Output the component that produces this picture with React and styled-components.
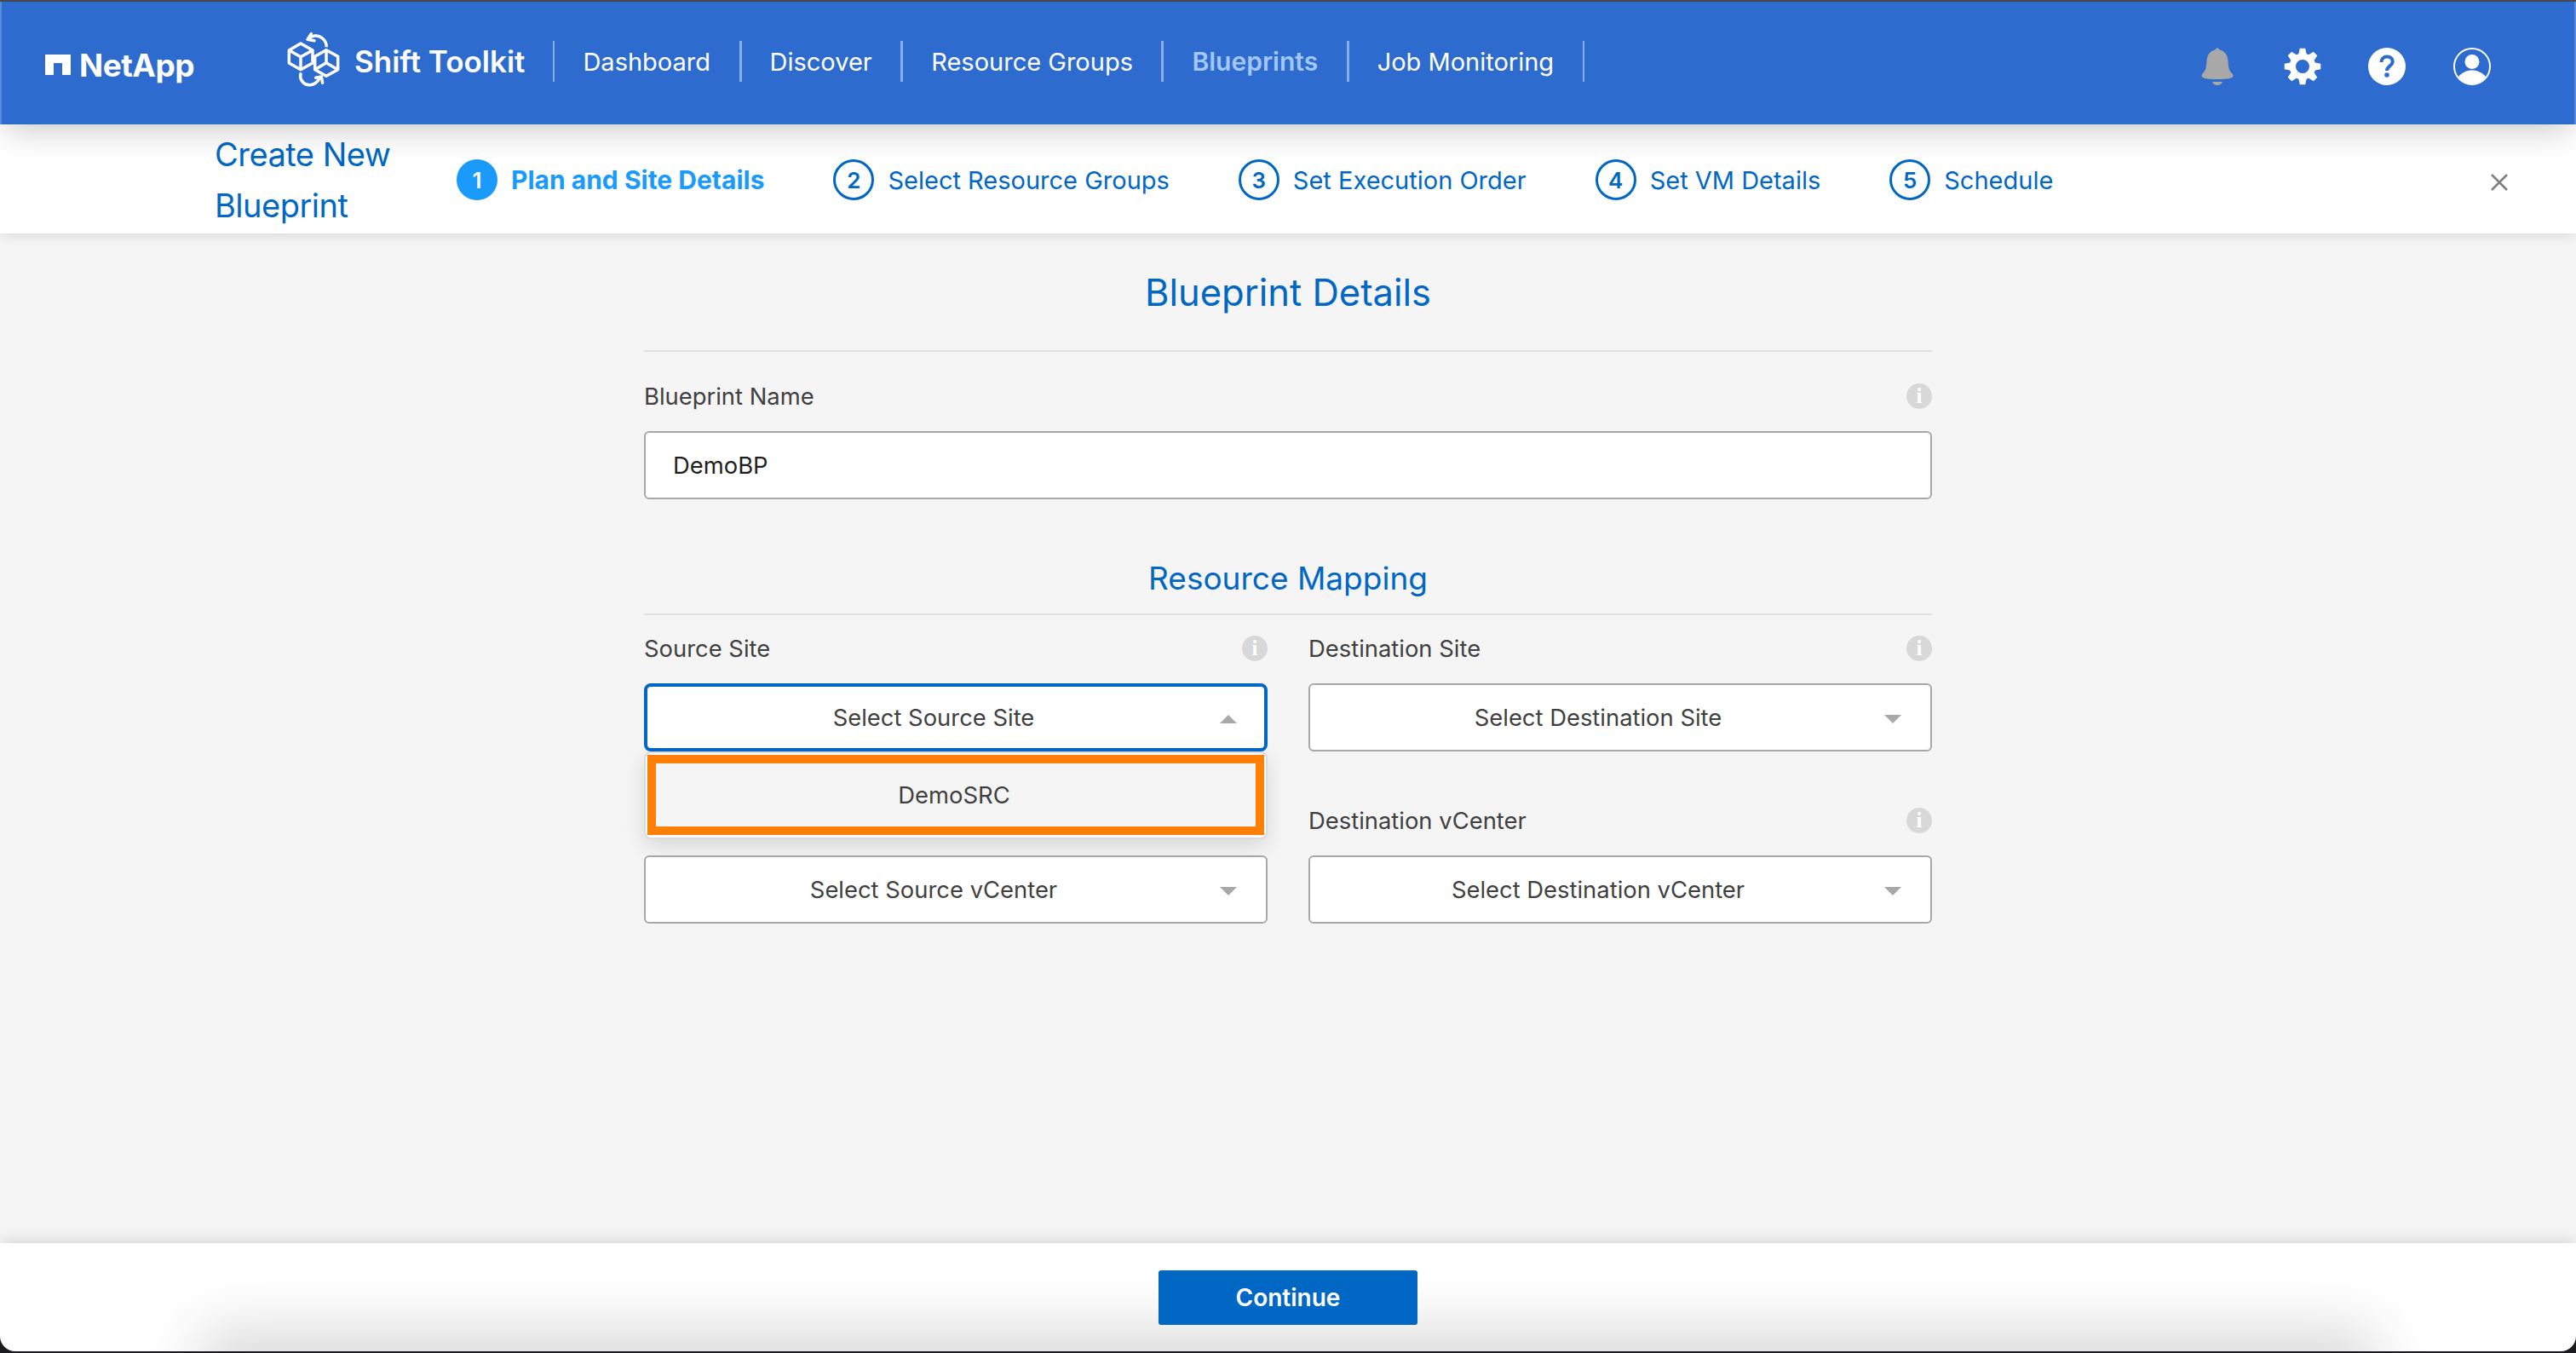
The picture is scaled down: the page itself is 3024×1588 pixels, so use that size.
import React from "react";
import styled, { createGlobalStyle } from "styled-components";

const GlobalStyle = createGlobalStyle`
    html, body {
        margin: 0;
        padding: 0;
        background: #1d1d1f;
    }
    * {
        box-sizing: border-box;
    }
`;

const Page = styled.div`
    width: 3024px;
    height: 1588px;
    display: flex;
    flex-direction: column;
    overflow: hidden;
    background: #1d1d1f;
    border-top: 2px solid #45474a;
    padding-bottom: 2px;
    font-family: Inter, "Liberation Sans", sans-serif;
    color: #404040;
`;

const Header = styled.header`
    position: relative;
    z-index: 3;
    flex: 0 0 144px;
    display: flex;
    align-items: center;
    padding: 0 0 2px 51px;
    background: #2d6bcf;
    border-left: 2px solid #5b8bd9;
    border-right: 2px solid #5b8bd9;
    box-shadow: 0 12px 36px -6px rgba(0, 0, 0, 0.22);
`;

const NetAppBrand = styled.div`
    width: 271px;
    display: flex;
    align-items: center;
    gap: 10px;
    padding-top: 6px;
    color: #fff;
    font-size: 37px;
    font-weight: 700;
    letter-spacing: -0.5px;
`;

const ToolkitBrand = styled.div`
    display: flex;
    align-items: center;
    gap: 2px;
    color: #fff;
    font-size: 35px;
    font-weight: 600;
    margin-top: -2px;
    padding-right: 33px;
`;

const CubesSvg = styled.svg`
    flex: none;
    margin-top: -4px;
`;

const NavList = styled.nav`
    display: flex;
    align-items: center;
    margin-top: -2px;
`;

const NavItem = styled.a`
    height: 48px;
    display: flex;
    align-items: center;
    padding: 0 33.5px 0 33px;
    border-left: ${(p) => (p.$thick ? 3 : 2)}px solid rgba(255, 255, 255, 0.45);
    color: ${(p) => (p.$active ? "#a3c7f7" : "#fff")};
    font-size: ${(p) => (p.$active ? 30 : 29)}px;
    font-weight: ${(p) => (p.$active ? 600 : 400)};
    white-space: nowrap;

    &:last-child {
        width: 2px;
        padding: 0;
    }
`;

const HeaderIcons = styled.div`
    margin-left: auto;
    margin-right: 98px;
    margin-top: 10px;
    display: flex;
    align-items: center;
    gap: 56px;
`;

const SubHeader = styled.div`
    position: relative;
    z-index: 2;
    flex: 0 0 128px;
    display: flex;
    align-items: center;
    padding: 0 80px 0 252px;
    background: #fff;
    box-shadow: 0 2px 14px rgba(0, 0, 0, 0.12);
`;

const WizardTitle = styled.h1`
    width: 284px;
    margin: 0;
    padding-top: 2px;
    color: #0067c5;
    font-size: 38px;
    font-weight: 400;
    line-height: 60px;
    letter-spacing: -0.5px;
`;

const Steps = styled.ol`
    display: flex;
    align-items: center;
    gap: 81px;
    margin: 0;
    padding: 2px 0 0;
    list-style: none;
`;

const Step = styled.li`
    display: flex;
    align-items: center;
    gap: 16px;
    font-size: ${(p) => (p.$active ? 30 : 29)}px;
    font-weight: ${(p) => (p.$active ? 700 : 400)};
    color: ${(p) => (p.$active ? "#1a9bfc" : "#0067c5")};
`;

const StepNumber = styled.span`
    width: 48px;
    height: 48px;
    display: flex;
    align-items: center;
    justify-content: center;
    border-radius: 50%;
    border: 3px solid ${(p) => (p.$active ? "#1a9bfc" : "#0067c5")};
    background: ${(p) => (p.$active ? "#1a9bfc" : "transparent")};
    color: ${(p) => (p.$active ? "#fff" : "#0067c5")};
    font-size: 26px;
    font-weight: 600;
`;

const CloseButton = styled.button`
    margin-left: auto;
    margin-top: 8px;
    width: 20px;
    height: 20px;
    padding: 0;
    border: 0;
    background: none;
    display: flex;
`;

const Main = styled.main`
    flex: 1;
    background: #f5f5f5;
    display: flex;
    justify-content: center;
`;

const Form = styled.div`
    width: 1512px;
    display: flex;
    flex-direction: column;
`;

const SectionTitle = styled.h2`
    margin: 0;
    display: flex;
    align-items: center;
    justify-content: center;
    border-bottom: 2px solid #dfe1e5;
    color: #0067c5;
    font-weight: 400;
    font-size: ${(p) => p.$size}px;
    height: ${(p) => p.$height}px;
    padding-bottom: ${(p) => p.$lift}px;
`;

const FieldHead = styled.div`
    height: 40px;
    display: flex;
    align-items: center;
    justify-content: space-between;
    font-size: 27.4px;
    margin-bottom: ${(p) => p.$gap}px;
`;

const InfoBadge = styled.span`
    width: 30px;
    height: 30px;
    display: flex;
    align-items: center;
    justify-content: center;
    border-radius: 50%;
    background: #d8d8d8;
    color: #fff;
    font-family: "Liberation Serif", serif;
    font-size: 25px;
    font-weight: 700;
`;

const TextInput = styled.div`
    height: 80px;
    display: flex;
    align-items: center;
    padding: 0 32px;
    background: #fff;
    border: 2px solid #a8a8a8;
    border-radius: 6px;
    font-size: 27.4px;
    color: #1e1e1e;
`;

const NameField = styled.div`
    padding-top: 32px;
    margin-bottom: 52px;
`;

const SiteGrid = styled.div`
    display: grid;
    grid-template-columns: 1fr 1fr;
    column-gap: 48px;
    row-gap: 61px;
    padding-top: 19px;
`;

const SelectBox = styled.div`
    position: relative;
    height: 80px;
    display: flex;
    align-items: center;
    justify-content: center;
    padding-right: 52px;
    background: #fff;
    border: ${(p) => (p.$open ? "4px solid #0067c5" : "2px solid #a8a8a8")};
    border-radius: ${(p) => (p.$open ? 8 : 6)}px;
    font-size: 27.4px;
`;

const Caret = styled.span`
    position: absolute;
    right: ${(p) => (p.$open ? 32 : 34)}px;
    top: 50%;
    margin-top: -3px;
    width: 0;
    height: 0;
    border-left: 10px solid transparent;
    border-right: 10px solid transparent;
    border-top: ${(p) => (p.$open ? "0" : "10px solid #a8a8a8")};
    border-bottom: ${(p) => (p.$open ? "10px solid #a8a8a8" : "0")};
`;

const Field = styled.div`
    position: relative;
`;

const Menu = styled.div`
    position: absolute;
    z-index: 1;
    left: 0;
    right: 0;
    top: 100%;
    height: 103px;
    padding: 2px;
    background: #fff;
    border: 2px solid #dcdcdc;
    border-radius: 8px;
    box-shadow: 0 8px 24px rgba(0, 0, 0, 0.12);
`;

const MenuOption = styled.div`
    height: 94px;
    display: flex;
    align-items: center;
    justify-content: center;
    padding-right: 4px;
    background: #f5f5f5;
    border: 10px solid #ff7f07;
    font-size: 27.4px;
`;

const Footer = styled.footer`
    position: relative;
    flex: 0 0 127px;
    display: flex;
    justify-content: center;
    padding-top: 32px;
    overflow: hidden;
    background: #fff;
    border-radius: 0 0 18px 18px;
    box-shadow: 0 -2px 18px rgba(0, 0, 0, 0.14);

    &::after {
        content: "";
        position: absolute;
        left: 260px;
        right: 260px;
        bottom: -30px;
        height: 30px;
        box-shadow: 0 0 70px 24px rgba(0, 0, 0, 0.16);
    }
`;

const ContinueButton = styled.button`
    position: relative;
    z-index: 1;
    width: 304px;
    height: 64px;
    border: 0;
    border-radius: 3px;
    background: #0067c5;
    color: #fff;
    font-family: inherit;
    font-size: 28px;
    font-weight: 600;
`;

const NetAppMark = () => (
    <svg width="30" height="24" viewBox="0 0 30 24">
        <path fill="#fff" d="M0 0h30v24H20V10H10v14H0z" />
    </svg>
);

const CubesLogo = () => (
    <CubesSvg width="90" height="80" viewBox="0 0 270 240" fill="none" stroke="#fff" strokeWidth="10.500" strokeLinejoin="round">
        <path d="M87 63l42 24v45l-42 23-41-23V87z" />
        <path d="M46 87l41 23 42-23M87 110v45" />
        <path d="M177 86l41 23v46l-41 23-40-23v-46z" />
        <path d="M177 86v45M137 155l40-24 41 24" />
        <path d="M178 76c0-24-20-42-42-40-9 1-16 5-22 11" />
        <path strokeLinecap="round" d="M124 29l-13 20 24 4" />
        <path d="M88 166c-8 22 8 44 32 43 14-1 26-9 34-24" />
        <path strokeLinecap="round" d="M140 184l20-4 4 22" />
    </CubesSvg>
);

const BellIcon = () => (
    <svg width="44" height="44" viewBox="-4 0 44 44">
        <path fill="#a8a8a8" d="M19 0l3 2.500C28 4 31 9 31.500 15 32 22 32 26 36 30c1.500 1.500 2 3 1 4-1 2-5 3-18 3S2 36 1 34c-1-1-.5-2.500 1-4 4-4 4-8 4.500-15C7 9 10 4 16 2.500z" />
        <path fill="#a8a8a8" d="M13 40h12c-1 2.500-3 4-6 4s-5-1.500-6-4z" />
    </svg>
);

// eight square teeth around a ring with a round hole
const gearPath = (() => {
    const point = (r, a) => `${(22 + r * Math.sin(a)).toFixed(2)} ${(22 - r * Math.cos(a)).toFixed(2)}`;
    let d = "";
    for (let i = 0; i < 8; i++) {
        const a = (i * Math.PI) / 4;
        d += `${i ? "L" : "M"}${point(15.5, a - 0.3)}L${point(21.5, a - 0.15)}L${point(21.5, a + 0.15)}L${point(15.5, a + 0.3)}`;
    }
    return `${d}ZM22 14a8 8 0 1 0 0 16a8 8 0 0 0 0-16Z`;
})();

const GearIcon = () => (
    <svg width="44" height="44" viewBox="-1 0 44 44" overflow="visible">
        <path fill="#fff" fillRule="evenodd" d={gearPath} />
    </svg>
);

const HelpIcon = () => (
    <svg width="44" height="44" viewBox="0 0 44 44">
        <circle cx="22" cy="22" r="22" fill="#fff" />
        <path fill="none" stroke="#2d6bcf" strokeWidth="4" d="M15.500 17c0-4 3-6.500 6.700-6.500s6.500 2.300 6.500 5.700c0 5.300-6.700 5-6.700 10.800" />
        <circle cx="22" cy="32" r="2.800" fill="#2d6bcf" />
    </svg>
);

const UserIcon = () => (
    <svg width="44" height="44" viewBox="0 0 44 44">
        <circle cx="22" cy="22" r="21" fill="none" stroke="#fff" strokeWidth="2" />
        <circle cx="22" cy="16.500" r="8.500" fill="#fff" />
        <path fill="#fff" d="M6 34c4-5 10-7.500 16-7.500S34 29 38 34c-4 6-10 9-16 9S10 40 6 34z" />
    </svg>
);

const CloseIcon = () => (
    <svg width="20" height="20" viewBox="0 0 20 20">
        <path stroke="#808080" strokeWidth="2.600" d="M1 1l18 18M19 1L1 19" />
    </svg>
);

const navItems = ["Dashboard", "Discover", "Resource Groups", "Blueprints", "Job Monitoring"];

const steps = ["Plan and Site Details", "Select Resource Groups", "Set Execution Order", "Set VM Details", "Schedule"];

const fields = [
    { label: "Source Site", placeholder: "Select Source Site", open: true },
    { label: "Destination Site", placeholder: "Select Destination Site" },
    { label: "Source vCenter", placeholder: "Select Source vCenter" },
    { label: "Destination vCenter", placeholder: "Select Destination vCenter" },
];

export default function App() {
    return (
        <Page>
            <GlobalStyle />
            <Header>
                <NetAppBrand>
                    <NetAppMark />
                    NetApp
                </NetAppBrand>
                <ToolkitBrand>
                    <CubesLogo />
                    Shift Toolkit
                </ToolkitBrand>
                <NavList>
                    {navItems.map((item, i) => (
                        <NavItem key={item} $active={item === "Blueprints"} $thick={i > 0}>
                            {item}
                        </NavItem>
                    ))}
                    <NavItem />
                </NavList>
                <HeaderIcons>
                    <BellIcon />
                    <GearIcon />
                    <HelpIcon />
                    <UserIcon />
                </HeaderIcons>
            </Header>
            <SubHeader>
                <WizardTitle>Create New Blueprint</WizardTitle>
                <Steps>
                    {steps.map((step, i) => (
                        <Step key={step} $active={i === 0}>
                            <StepNumber $active={i === 0}>{i + 1}</StepNumber>
                            {step}
                        </Step>
                    ))}
                </Steps>
                <CloseButton>
                    <CloseIcon />
                </CloseButton>
            </SubHeader>
            <Main>
                <Form>
                    <SectionTitle $size={43.5} $height={139} $lift={0}>Blueprint Details</SectionTitle>
                    <NameField>
                        <FieldHead $gap={21}>
                            Blueprint Name
                            <InfoBadge>i</InfoBadge>
                        </FieldHead>
                        <TextInput>DemoBP</TextInput>
                    </NameField>
                    <SectionTitle $size={37} $height={84} $lift={2}>Resource Mapping</SectionTitle>
                    <SiteGrid>
                        {fields.map((field) => (
                            <Field key={field.label}>
                                <FieldHead $gap={21}>
                                    {field.label}
                                    <InfoBadge>i</InfoBadge>
                                </FieldHead>
                                <SelectBox $open={field.open}>
                                    {field.placeholder}
                                    <Caret $open={field.open} />
                                </SelectBox>
                                {field.open && (
                                    <Menu>
                                        <MenuOption>DemoSRC</MenuOption>
                                    </Menu>
                                )}
                            </Field>
                        ))}
                    </SiteGrid>
                </Form>
            </Main>
            <Footer>
                <ContinueButton>Continue</ContinueButton>
            </Footer>
        </Page>
    );
}
